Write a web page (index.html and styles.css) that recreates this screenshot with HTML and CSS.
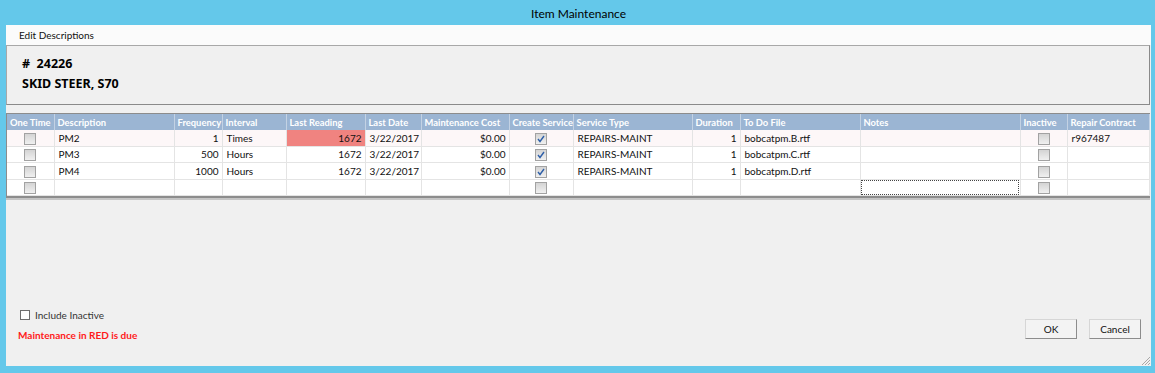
FILE: index.html
```html
<!DOCTYPE html>
<html lang="en">

<head>
    <meta charset="UTF-8">
    <title>Item Maintenance</title>
    <link rel="stylesheet" href="styles.css">
</head>

<body>
    <div class="window">
        <div class="titlebar">Item Maintenance</div>

        <div class="dialog">
            <div class="menubar"><span class="menu-item">Edit Descriptions</span></div>

            <div class="item-panel">
                <div class="item-no"># &nbsp;24226</div>
                <div class="item-name">SKID STEER, S70</div>
            </div>

            <div class="grid-wrap">
                <table class="grid">
                    <colgroup>
                        <col style="width:47px">
                        <col style="width:120px">
                        <col style="width:48px">
                        <col style="width:64px">
                        <col style="width:79px">
                        <col style="width:56px">
                        <col style="width:88px">
                        <col style="width:64px">
                        <col style="width:119px">
                        <col style="width:48px">
                        <col style="width:120px">
                        <col style="width:160px">
                        <col style="width:47px">
                        <col style="width:82px">
                    </colgroup>
                    <thead>
                        <tr>
                            <th>One Time</th>
                            <th>Description</th>
                            <th>Frequency</th>
                            <th>Interval</th>
                            <th>Last Reading</th>
                            <th>Last Date</th>
                            <th>Maintenance Cost</th>
                            <th>Create Service</th>
                            <th>Service Type</th>
                            <th>Duration</th>
                            <th>To Do File</th>
                            <th>Notes</th>
                            <th>Inactive</th>
                            <th>Repair Contract</th>
                        </tr>
                    </thead>
                    <tbody>
                        <tr class="current">
                            <td class="c"><span class="cb"></span></td>
                            <td>PM2</td>
                            <td class="r">1</td>
                            <td>Times</td>
                            <td class="r due">1672</td>
                            <td>3/22/2017</td>
                            <td class="r">$0.00</td>
                            <td class="c"><span class="cb on"><svg viewBox="0 0 10 10"><polyline points="2,5 4,7.5 8,2"/></svg></span></td>
                            <td>REPAIRS-MAINT</td>
                            <td class="r">1</td>
                            <td>bobcatpm.B.rtf</td>
                            <td></td>
                            <td class="c"><span class="cb"></span></td>
                            <td>r967487</td>
                        </tr>
                        <tr>
                            <td class="c"><span class="cb"></span></td>
                            <td>PM3</td>
                            <td class="r">500</td>
                            <td>Hours</td>
                            <td class="r">1672</td>
                            <td>3/22/2017</td>
                            <td class="r">$0.00</td>
                            <td class="c"><span class="cb on"><svg viewBox="0 0 10 10"><polyline points="2,5 4,7.5 8,2"/></svg></span></td>
                            <td>REPAIRS-MAINT</td>
                            <td class="r">1</td>
                            <td>bobcatpm.C.rtf</td>
                            <td></td>
                            <td class="c"><span class="cb"></span></td>
                            <td></td>
                        </tr>
                        <tr>
                            <td class="c"><span class="cb"></span></td>
                            <td>PM4</td>
                            <td class="r">1000</td>
                            <td>Hours</td>
                            <td class="r">1672</td>
                            <td>3/22/2017</td>
                            <td class="r">$0.00</td>
                            <td class="c"><span class="cb on"><svg viewBox="0 0 10 10"><polyline points="2,5 4,7.5 8,2"/></svg></span></td>
                            <td>REPAIRS-MAINT</td>
                            <td class="r">1</td>
                            <td>bobcatpm.D.rtf</td>
                            <td></td>
                            <td class="c"><span class="cb"></span></td>
                            <td></td>
                        </tr>
                        <tr>
                            <td class="c"><span class="cb"></span></td>
                            <td></td>
                            <td></td>
                            <td></td>
                            <td></td>
                            <td></td>
                            <td></td>
                            <td class="c"><span class="cb"></span></td>
                            <td></td>
                            <td></td>
                            <td></td>
                            <td class="focus"></td>
                            <td class="c"><span class="cb"></span></td>
                            <td></td>
                        </tr>
                    </tbody>
                </table>
            </div>

            <div class="footer">
                <div class="footer-left">
                    <div class="check-line"><span class="box"></span>Include Inactive</div>
                    <div class="due-note">Maintenance in RED is due</div>
                </div>
                <div class="buttons">
                    <button class="btn">OK</button>
                    <button class="btn">Cancel</button>
                </div>
            </div>

            <svg class="grip" viewBox="0 0 11 11">
                <line x1="10" y1="2" x2="2" y2="10"/>
                <line x1="10" y1="5" x2="5" y2="10"/>
                <line x1="10" y1="8" x2="8" y2="10"/>
            </svg>
        </div>
    </div>
</body>

</html>
```

FILE: styles.css
```css
body {
    margin: 0;
    font-family: Lato, "Liberation Sans", sans-serif;
}

.window {
    width: 1155px;
    height: 373px;
    box-sizing: border-box;
    padding: 0 4px 7px 6px;
    background-color: #64c8ea;
    display: flex;
    flex-direction: column;
}

.titlebar {
    height: 25px;
    line-height: 27px;
    text-align: center;
    font-size: 12px;
    color: #000;
}

.dialog {
    flex: 1;
    position: relative;
    background-color: #f0f0f0;
    display: flex;
    flex-direction: column;
}

.menubar {
    height: 20px;
    line-height: 20px;
    background-color: #fbfbfb;
    padding-left: 13px;
    font-size: 10px;
    color: #111;
}

.item-panel {
    height: 60px;
    box-sizing: border-box;
    margin-right: 1px;
    padding: 8px 0 0 15px;
    border: 1px solid #a8a8a8;
    border-right-color: #8a8a8a;
    border-bottom-color: #8a8a8a;
    font-family: "Noto Sans", sans-serif;
    font-size: 12.5px;
    font-weight: bold;
    line-height: 20px;
    color: #000;
}

.grid-wrap {
    margin: 8px 1px 0 0;
    border: 1px solid #8c8c8c;
    border-bottom: 2px solid #8c8c8c;
    box-shadow: 0 2px 0 #c4c4c4;
    background-color: #fff;
}

.grid {
    width: 100%;
    border-collapse: collapse;
    table-layout: fixed;
    font-size: 10px;
    color: #111;
}

.grid th {
    height: 16px;
    padding: 0 1px 0 3px;
    background-color: #9bb5d3;
    color: #fff;
    font-size: 9.4px;
    font-weight: bold;
    text-align: left;
    white-space: nowrap;
    overflow: hidden;
    border-right: 1px solid #c3d2e4;
}

.grid td {
    height: 15.6px;
    padding: 0 3px 0 4px;
    white-space: nowrap;
    overflow: hidden;
    border-right: 1px solid #e4e4e4;
    border-bottom: 1px solid #e4e4e4;
}

.grid tr.current td {
    background-color: #fdf7f8;
}

.grid td.r {
    text-align: right;
}

.grid td.c {
    text-align: center;
    padding: 0;
}

.grid tr.current td.due {
    background-color: #f08380;
}

.grid td.focus {
    outline: 1px dotted #444;
    outline-offset: -2px;
}

.cb {
    display: inline-block;
    width: 10px;
    height: 10px;
    vertical-align: middle;
    border: 1px solid #a2a2a2;
    background: linear-gradient(#d4d4d4, #f0f0f0);
    position: relative;
}

.cb svg {
    position: absolute;
    left: 0;
    top: 0;
    width: 10px;
    height: 10px;
}

.cb polyline {
    fill: none;
    stroke: #2e5fa8;
    stroke-width: 1.4;
}

.footer {
    margin-top: auto;
    display: flex;
    justify-content: space-between;
    align-items: flex-end;
    padding: 0 10px 24px 12px;
}

.check-line {
    height: 14px;
    line-height: 14px;
    font-size: 10px;
    color: #333;
    display: flex;
    align-items: center;
    margin-bottom: 6px;
}

.box {
    width: 8px;
    height: 8px;
    margin: 0 5px 0 2px;
    border: 1px solid #6e6e6e;
    background-color: #fff;
}

.due-note {
    height: 14px;
    line-height: 14px;
    font-size: 10px;
    font-weight: bold;
    color: #ff1a1a;
}

.buttons {
    display: flex;
    gap: 12px;
    margin-bottom: 3px;
}

.btn {
    width: 52px;
    height: 20px;
    padding: 0;
    font-family: inherit;
    font-size: 10px;
    color: #111;
    background-color: #f3f3f3;
    border: 1px solid #d6d6d6;
    border-right-color: #8c8c8c;
    border-bottom-color: #8c8c8c;
}

.grip {
    position: absolute;
    right: 0;
    bottom: 0;
    width: 11px;
    height: 11px;
}

.grip line {
    stroke: #a8a8a8;
    stroke-width: 1;
}
```
